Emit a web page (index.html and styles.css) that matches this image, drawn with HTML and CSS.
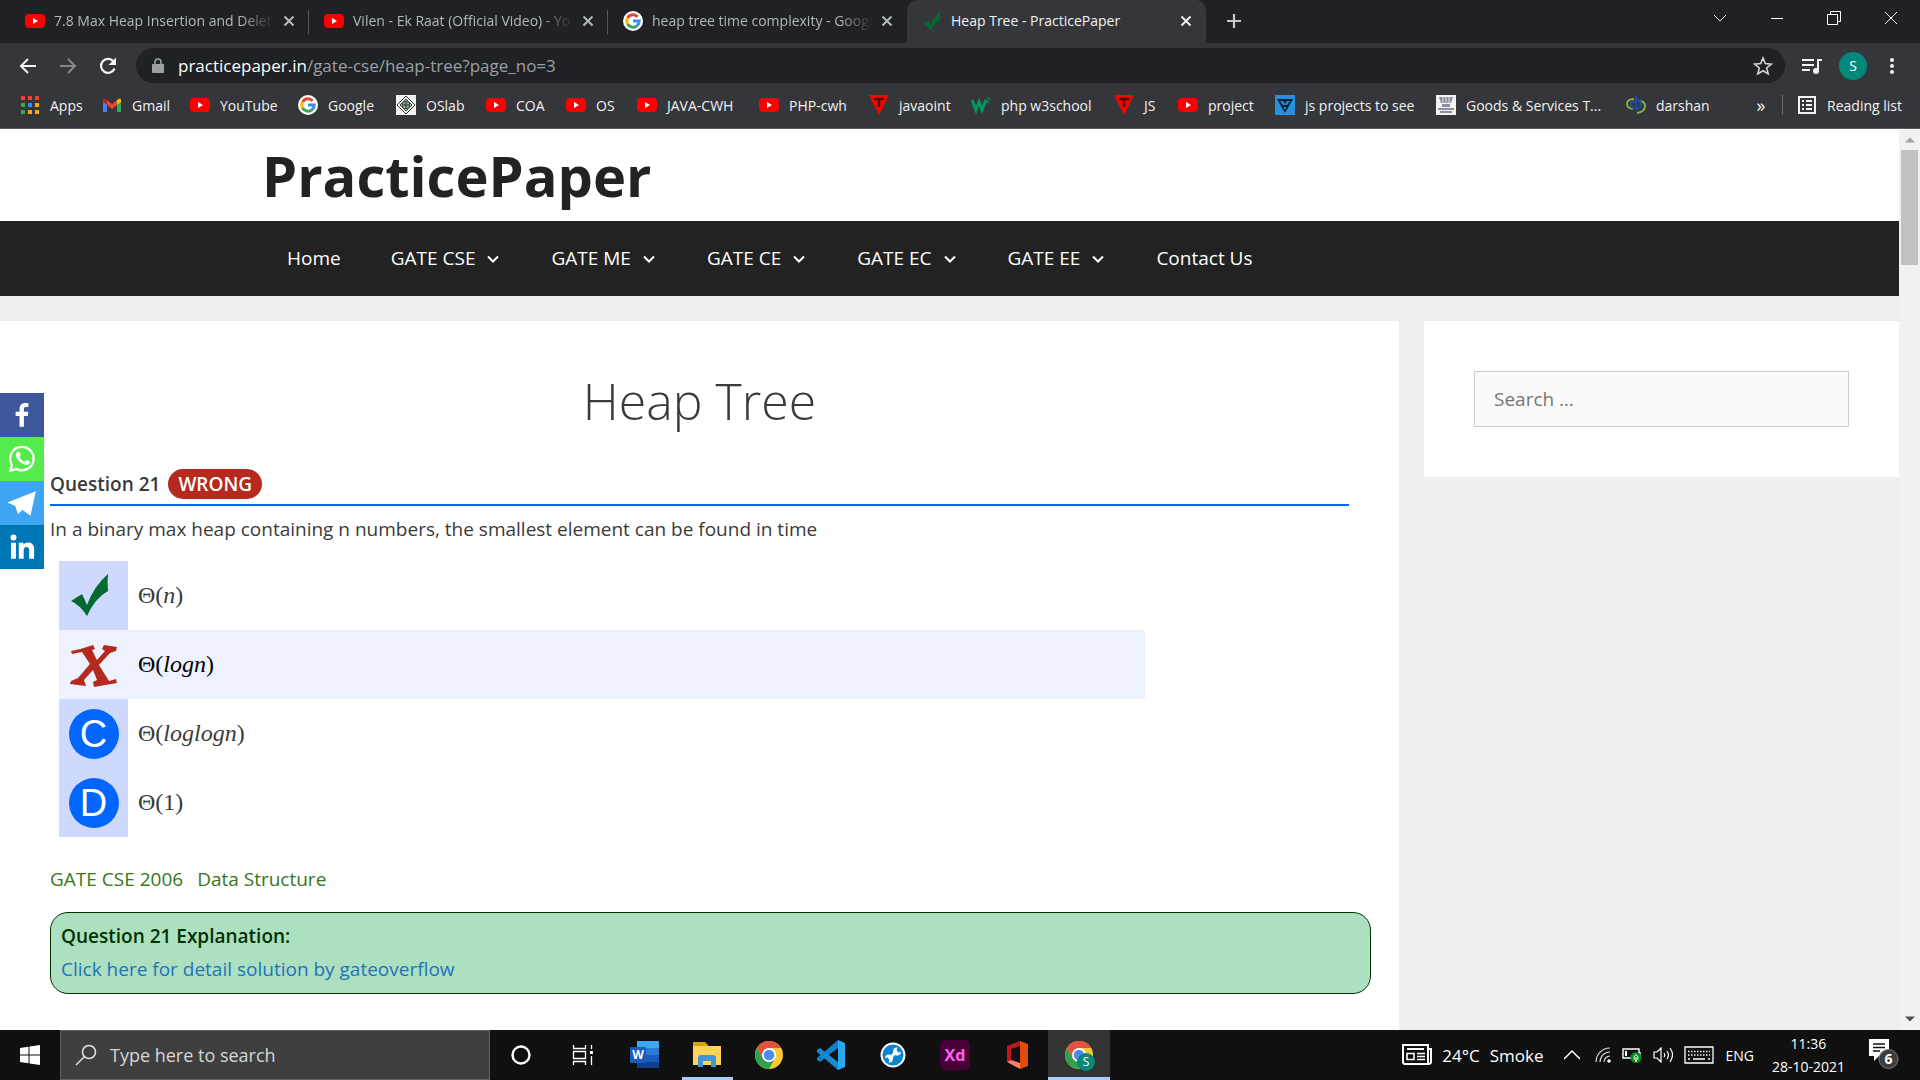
FILE: index.html
```html
<!DOCTYPE html>
<html lang="en">
<head>
<meta charset="utf-8">
<meta name="viewport" content="width=device-width, initial-scale=1">
<title>Heap Tree - PracticePaper</title>
<link rel="stylesheet" href="styles.css">
</head>
<body>
<svg class="sprite" aria-hidden="true">
  <symbol id="yt" viewBox="0 0 20 20"><rect y="3" width="20" height="14" rx="4" fill="#f00"/><path d="M8 7l5 3-5 3z" fill="#fff"/></symbol>
  <symbol id="google" viewBox="0 0 20 20"><circle cx="10" cy="10" r="10" fill="#fff"/><g fill="none" stroke-width="3"><path d="M14.6 5.8A6.2 6.2 0 0 0 4.6 7" stroke="#ea4335"/><path d="M4.6 7a6.2 6.2 0 0 0 0 6" stroke="#fbbc05"/><path d="M4.6 13a6.2 6.2 0 0 0 9.6 1.6" stroke="#34a853"/><path d="M14.2 14.6A6 6 0 0 0 16.2 10H10" stroke="#4285f4"/></g></symbol>
  <symbol id="close" viewBox="0 0 12 12"><path d="M1.5 1.5l9 9m0-9l-9 9" stroke="currentColor" stroke-width="2" fill="none"/></symbol>
  <symbol id="tick" viewBox="0 0 40 44"><path d="M1 28L12 21Q15 27 17 32Q24 13 38 1Q37 9 38 18Q25 25 17 43Q10 32 1 28z" fill="#006a31"/></symbol>
  <symbol id="tpoint" viewBox="0 0 20 20"><path d="M0 0h20L10 20z" fill="#f00"/><path d="M5 4h10M10 4v8" stroke="#4a1010" stroke-width="2.5"/></symbol>
  <symbol id="down" viewBox="0 0 12 8"><path d="M1 1.5l5 5 5-5" stroke="currentColor" stroke-width="2" fill="none"/></symbol>
  <symbol id="chrome" viewBox="0 0 28 28"><circle cx="14" cy="14" r="14" fill="#fcc934"/><path d="M1.9 7A14 14 0 0 1 26.1 7H14z" fill="#e15241"/><path d="M1.9 7A14 14 0 0 0 14 28L20 17.5 14 14 8 17.5z" fill="#2da14f"/><path d="M1.9 7A14 14 0 0 1 26.1 7H14L8 17.5z" fill="#e15241"/><circle cx="14" cy="14" r="7" fill="#fff"/><circle cx="14" cy="14" r="5.3" fill="#4c8bf5"/></symbol>
</svg>

<header class="chrome">
  <div class="tabstrip">
    <div class="tab"><svg class="fav"><use href="#yt"/></svg><span class="tab-title">7.8 Max Heap Insertion and Deletion</span><button class="tab-close" aria-label="Close tab"><svg><use href="#close"/></svg></button></div>
    <div class="tab"><svg class="fav"><use href="#yt"/></svg><span class="tab-title">Vilen - Ek Raat (Official Video) - YouTube</span><button class="tab-close" aria-label="Close tab"><svg><use href="#close"/></svg></button></div>
    <div class="tab"><svg class="fav"><use href="#google"/></svg><span class="tab-title">heap tree time complexity - Google</span><button class="tab-close" aria-label="Close tab"><svg><use href="#close"/></svg></button></div>
    <div class="tab active"><svg class="fav"><use href="#tick"/></svg><span class="tab-title">Heap Tree - PracticePaper</span><button class="tab-close" aria-label="Close tab"><svg><use href="#close"/></svg></button></div>
    <button class="new-tab" aria-label="New tab"><svg viewBox="0 0 16 16"><path d="M8 1v14M1 8h14" stroke="#c5c7ca" stroke-width="2.2"/></svg></button>
    <div class="window-controls">
      <button aria-label="Search tabs"><svg viewBox="0 0 16 16"><path d="M2 5l6 6 6-6" class="thin"/></svg></button>
      <button aria-label="Minimize"><svg viewBox="0 0 16 16"><path d="M2 8.500h12" class="thin"/></svg></button>
      <button aria-label="Restore"><svg viewBox="0 0 16 16"><path d="M1.500 4.500h10v10h-10zM4.500 4.500v-3h10v10h-3" class="thin"/></svg></button>
      <button aria-label="Close window"><svg viewBox="0 0 16 16"><path d="M2 2l12 12m0-12L2 14" class="thin"/></svg></button>
    </div>
  </div>
  <div class="toolbar">
    <button class="tool" aria-label="Back"><svg viewBox="0 0 20 20"><path d="M18 10H3m7-7l-7 7 7 7" fill="none" stroke="#f1f3f4" stroke-width="2"/></svg></button>
    <button class="tool" aria-label="Forward"><svg viewBox="0 0 20 20"><path d="M2 10h15m-7-7l7 7-7 7" fill="none" stroke="#85878a" stroke-width="2"/></svg></button>
    <button class="tool" aria-label="Reload"><svg viewBox="0 0 20 20"><path d="M16.500 12.500A7 7 0 1 1 15.500 5.500" fill="none" stroke="#f1f3f4" stroke-width="2.200"/><path d="M18 1.500v7.500h-7.500z" fill="#f1f3f4"/></svg></button>
    <div class="omnibox">
      <svg class="lock" viewBox="0 0 12 16"><rect y="6" width="12" height="9" rx="1" fill="#9aa0a6"/><path d="M3 7V4a3 3 0 0 1 6 0v3" fill="none" stroke="#9aa0a6" stroke-width="1.600"/></svg>
      <a class="url" href="#top"><span>practicepaper.in</span>/gate-cse/heap-tree?page_no=3</a>
      <button class="star" aria-label="Bookmark this page"><svg viewBox="0 0 20 20"><path d="M10 2l2.300 5.600 6 .5-4.600 3.900 1.500 5.900L10 14.700l-5.200 3.200 1.500-5.900L1.700 8.100l6-.5z" fill="none" stroke="#d2d4d7" stroke-width="1.600"/></svg></button>
    </div>
    <button class="tool" aria-label="Media"><svg viewBox="0 0 20 20"><path d="M0 4h12M0 9h12M0 14h8" stroke="#f1f3f4" stroke-width="2"/><path d="M16 15V4h4" fill="none" stroke="#f1f3f4" stroke-width="2"/><circle cx="14" cy="15" r="3" fill="#f1f3f4"/></svg></button>
    <button class="avatar" aria-label="Profile">S</button>
    <button class="tool" aria-label="Menu"><svg viewBox="0 0 20 20"><g fill="#f1f3f4"><circle cx="10" cy="4" r="2"/><circle cx="10" cy="10" r="2"/><circle cx="10" cy="16" r="2"/></g></svg></button>
  </div>
  <nav class="bookmarks" aria-label="Bookmarks">
    <a href="#apps"><svg viewBox="0 0 20 20"><path d="M1 3h4M8 3h4M15 3h4" stroke="#ea4335" stroke-width="4"/><path d="M1 10h4" stroke="#34a853" stroke-width="4"/><path d="M8 10h4" stroke="#2196f3" stroke-width="4"/><path d="M15 10h4M8 17h4M15 17h4" stroke="#fbab05" stroke-width="4"/><path d="M1 17h4" stroke="#34a853" stroke-width="4"/></svg>Apps</a>
    <a href="#gmail"><svg viewBox="0 0 20 20"><path d="M1 5v12h4V8z" fill="#4285f4"/><path d="M19 5v12h-4V8z" fill="#34a853"/><path d="M5 5l5 4 5-4v5l-5 4-5-4z" fill="#ea4335"/><path d="M1 5q0-3 4 0v5L1 7z" fill="#c5221f"/><path d="M19 5q0-3-4 0v5l4-3z" fill="#fbbc04"/></svg>Gmail</a>
    <a href="#youtube"><svg><use href="#yt"/></svg>YouTube</a>
    <a href="#google-home"><svg><use href="#google"/></svg>Google</a>
    <a href="#oslab"><svg viewBox="0 0 20 20"><path d="M0 0h20v20H0z" fill="#f4f4f4"/><path d="M10 1l9 9-9 9-9-9zM10 4l6 6-6 6-6-6z" fill="none" stroke="#333"/><circle cx="10" cy="10" r="4" fill="#8aa890" stroke="#345c40"/><path d="M6 10h8M10 6v8" stroke="#333"/></svg>OSlab</a>
    <a href="#coa"><svg><use href="#yt"/></svg>COA</a>
    <a href="#os"><svg><use href="#yt"/></svg>OS</a>
    <a href="#java"><svg><use href="#yt"/></svg>JAVA-CWH</a>
    <a href="#php"><svg><use href="#yt"/></svg>PHP-cwh</a>
    <a href="#javaoint"><svg><use href="#tpoint"/></svg>javaoint</a>
    <a href="#w3"><svg viewBox="0 0 20 20"><path d="M1 5l4 10 3-8 3 8 4-10" fill="none" stroke="#059862" stroke-width="3"/><path d="M16 3h3l-1.500 2.500q2 1-1.500 2" fill="none" stroke="#059862"/></svg>php w3school</a>
    <a href="#js"><svg><use href="#tpoint"/></svg>JS</a>
    <a href="#project"><svg><use href="#yt"/></svg>project</a>
    <a href="#jsprojects"><svg viewBox="0 0 20 20"><path d="M0 0h20v20H0z" fill="#2590dd"/><path d="M2 4h16l-8 14z" fill="#0b2036"/><path d="M5 6h3l2 3 2-3h3l-3 4H8zM9 12h2v2H9z" fill="#2590dd"/></svg>js projects to see</a>
    <a href="#gst"><svg viewBox="0 0 20 20"><path d="M0 0h20v20H0z" fill="#f2f2f2"/><path d="M3 2h14l-2 6H5zM6 9h8v3H6z" fill="#8b8fa0"/><path d="M2 14h16M4 17h12" stroke="#8b8fa0" stroke-width="2"/><path d="M7 2v6m3-6v6m3-6v6" stroke="#ddd"/></svg>Goods &amp; Services T...</a>
    <a href="#darshan"><svg viewBox="0 0 20 20"><path d="M8 4Q1 4 1 9q0 4 6 5M13 6q6 0 6 5 0 6-8 7" fill="none" stroke="#7fb13c" stroke-width="2"/><path d="M10 1v14M9 6q-4 0-4 3.500T9 13M11 5q4 0 4 4t-4 4" fill="none" stroke="#1f4ea0" stroke-width="2"/></svg>darshan</a>
    <button class="more" aria-label="More bookmarks">»</button>
    <button class="reading"><svg viewBox="0 0 20 20"><rect x="2" y="2" width="16" height="16" fill="none" stroke="#f1f3f4" stroke-width="2"/><path d="M5 6h2M9 6h6M5 10h2M9 10h6M5 14h2M9 14h6" stroke="#f1f3f4" stroke-width="2"/></svg>Reading list</button>
  </nav>
</header>

<div class="viewport" id="top">
  <div class="page">
    <div class="site-header"><div class="container"><a class="site-title" href="#top">PracticePaper</a></div></div>
    <nav class="site-nav" aria-label="Primary"><div class="container nav-list">
      <a href="#home">Home</a>
      <a href="#cse">GATE CSE<svg><use href="#down"/></svg></a>
      <a href="#me">GATE ME<svg><use href="#down"/></svg></a>
      <a href="#ce">GATE CE<svg><use href="#down"/></svg></a>
      <a href="#ec">GATE EC<svg><use href="#down"/></svg></a>
      <a href="#ee">GATE EE<svg><use href="#down"/></svg></a>
      <a href="#contact">Contact Us</a>
    </div></nav>
    <div class="columns">
      <main class="content">
        <h1>Heap Tree</h1>
        <div class="question-head"><span>Question 21</span><span class="verdict">WRONG</span></div>
        <p class="question">In a binary max heap containing n numbers, the smallest element can be found in time</p>
        <table class="answers">
          <tbody>
          <tr><th scope="row"><svg class="mark" viewBox="0 0 50 50" role="img" aria-label="Correct"><use href="#tick" x="1" y="2" width="40" height="44"/></svg></th><td>Θ(<i>n</i>)</td></tr>
          <tr class="chosen"><th scope="row"><svg class="mark" viewBox="-1 -4 50 50" role="img" aria-label="Wrong"><path d="M1 7Q12 5 23 1L25 5 22 6 27 16 35 7 32 5 34 1 47 3 46 7 40 9 29 21 39 37 46 35 47 39 24 43 23 38 27 36 23 26 14 36 16 42 0 40 1 37 8 34 20 20 12 8 2 10z" fill="#b5291f"/></svg></th><td>Θ(<i>logn</i>)</td></tr>
          <tr><th scope="row"><span class="letter">C</span></th><td>Θ(<i>loglogn</i>)</td></tr>
          <tr><th scope="row"><span class="letter">D</span></th><td>Θ(1)</td></tr>
          </tbody>
        </table>
        <div class="topics"><a href="#gate2006">GATE CSE 2006</a><a href="#ds">Data Structure</a></div>
        <section class="explanation">
          <h2>Question 21 Explanation:</h2>
          <a href="#solution">Click here for detail solution by gateoverflow</a>
        </section>
      </main>
      <aside class="sidebar"><input type="search" placeholder="Search …" aria-label="Search"></aside>
    </div>
  </div>
  <div class="scrollbar" aria-hidden="true">
    <svg viewBox="0 0 10 6"><path d="M0 5.500l5-5 5 5z" fill="#a3a3a3"/></svg>
    <div class="thumb"></div>
    <svg viewBox="0 0 10 6"><path d="M0 .5l5 5 5-5z" fill="#505050"/></svg>
  </div>
  <div class="social">
    <a class="fb" href="#facebook" aria-label="Facebook"><svg viewBox="0 0 32 32"><path d="M17.800 27V17h3.600l.5-4h-4.100v-2.500c0-1.200.4-2 2-2h2.200V4.900c-4.800-.7-8.300.7-8.300 5.300V13H10v4h3.700v10z" fill="#fff"/></svg></a>
    <a class="wa" href="#whatsapp" aria-label="WhatsApp"><svg viewBox="0 0 32 32"><path d="M5 27l1.500-5.600A11 11 0 1 1 11 25.500z" fill="none" stroke="#fff" stroke-width="2.200"/><path d="M11.500 9.500c1-1 2-.6 2.300.2l1 2.400c.2.700-1.300 1.600-1 2.200 1 2 2.500 3.400 4.700 4.200.8.200 1.500-1.800 2.300-1.500l2.400 1.200c.8.500.2 2-.8 2.700-2 1.300-4.600.3-7-1.200-3-2-7.500-6.700-3.900-10.200z" fill="#fff"/></svg></a>
    <a class="tg" href="#telegram" aria-label="Telegram"><svg viewBox="0 0 32 32"><path d="M29 5L2 15.500l7.500 3 2.700 7.800 4.300-3.800 7.500 5.500z" fill="#fff"/></svg></a>
    <a class="li" href="#linkedin" aria-label="LinkedIn"><svg viewBox="0 0 32 32"><circle cx="8" cy="7" r="2.800" fill="#fff"/><path d="M5.700 12h4.600v15H5.700zM13 12h4.400v2c2-3.300 10-3.500 10 4v9h-4.600v-8c0-4-5.200-4-5.200 0v8H13z" fill="#fff"/></svg></a>
  </div>
</div>

<footer class="taskbar">
  <button class="start" aria-label="Start"><svg viewBox="0 0 20 20"><path d="M0 3l8.500-1.200v7.700H0zM9.500 1.500L20 0v9.500H9.500zM0 10.500h8.500v7.700L0 17zM9.500 10.500H20V20L9.500 18.500z" fill="#fff"/></svg></button>
  <label class="task-search"><svg viewBox="0 0 22 22"><circle cx="14" cy="8" r="6.500" fill="none" stroke="#e4e4e4" stroke-width="1.500"/><path d="M9.500 12.500L1 21" stroke="#e4e4e4" stroke-width="1.500"/></svg><input type="text" placeholder="Type here to search" aria-label="Type here to search"></label>
  <div class="apps">
    <button aria-label="Cortana"><svg viewBox="0 0 32 32"><circle cx="16" cy="16" r="8.500" fill="none" stroke="#fff" stroke-width="2.400"/></svg></button>
    <button aria-label="Task view"><svg viewBox="0 0 32 32"><path d="M6.500 6v3.500h12V6M6.500 26v-3.500h12V26M6.500 12.500h12v7h-12zM24.500 6v4M24.500 17v9" fill="none" stroke="#fff" stroke-width="1.300"/><path d="M23 12h3v3h-3z" fill="#fff"/></svg></button>
    <button aria-label="Word"><svg viewBox="0 0 32 32"><path d="M8 2h22v7H8z" fill="#41a5ee"/><path d="M8 9h22v7H8z" fill="#2b7cd3"/><path d="M8 16h22v7H8z" fill="#185abd"/><path d="M8 23h22v6H8z" fill="#103f91"/><rect x="1" y="8" width="16" height="16" rx="1" fill="#185abd"/><text x="9" y="20" text-anchor="middle" class="glyph word">W</text></svg></button>
    <button class="running" aria-label="File Explorer"><svg viewBox="0 0 32 32"><path d="M2 3h12l3 3v6H2z" fill="#dda010"/><path d="M2 7h28v19H2z" fill="#ffd35a"/><path d="M7 28v-9q0-3 3-3h12q3 0 3 3v9h-5v-6h-8v6z" fill="#3f95d8"/></svg></button>
    <button aria-label="Chrome"><svg viewBox="-2 -2 32 32"><use href="#chrome" width="28" height="28"/></svg></button>
    <button aria-label="Visual Studio Code"><svg viewBox="0 0 32 32"><path d="M23 1l7 3v24l-7 3z" fill="#29a9f2"/><path d="M23 1v8L5 23l-3-2v-2z" fill="#0f7fc9"/><path d="M23 31v-8L5 9l-3 2v2z" fill="#1689d1"/></svg></button>
    <button aria-label="Support tool"><svg viewBox="0 0 32 32"><circle cx="16" cy="16" r="11.500" fill="#0a84cf" stroke="#fff" stroke-width="2"/><path d="M12 20l8-8" stroke="#fff" stroke-width="3"/><path d="M20.500 8.500a4 4 0 1 0 3.500 4.500l-3 .5-1.500-2zM11.500 23.500a4 4 0 1 0-3.500-4.500l3-.5 1.500 2z" fill="#fff"/></svg></button>
    <button aria-label="Adobe XD"><svg viewBox="0 0 32 32"><rect x="1" y="1" width="30" height="30" rx="5" fill="#470137"/><text x="16" y="22" text-anchor="middle" class="glyph xd">Xd</text></svg></button>
    <button aria-label="Office"><svg viewBox="0 0 32 32"><path d="M19 2L6 7v16l4-2V10l9-3z" fill="#c3161c"/><path d="M19 2l8 3v22l-8 3z" fill="#e64a0b"/><path d="M6 23l4-2 9 3v6z" fill="#ff7d73"/></svg></button>
    <button class="running current" aria-label="Chrome, profile S"><svg viewBox="-2 -2 32 32"><use href="#chrome" width="28" height="28"/><circle cx="21" cy="21" r="9" fill="#06877a"/><text x="21" y="25" text-anchor="middle" class="glyph badge-s">S</text></svg></button>
  </div>
  <div class="tray">
    <button class="weather"><svg viewBox="0 0 30 22"><path d="M1 1h25v19H3q-2 0-2-2zM26 5h3v13q0 2-3 2M5 5h17" fill="none" stroke="#fff" stroke-width="2"/><path d="M5 9.500h7v6H5zM15 9.500h8M15 12.500h8M15 15.500h8" fill="none" stroke="#fff" stroke-width="1.600"/></svg><span>24°C</span><span>Smoke</span></button>
    <button class="expand" aria-label="Show hidden icons"><svg class="w16" viewBox="0 0 16 16"><path d="M0 12l8-8 8 8" fill="none" stroke="#fff" stroke-width="1.500"/></svg></button>
    <button aria-label="Network"><svg class="w16" viewBox="0 0 16 16"><path d="M1 15A14 14 0 0 1 15 1M5 15A10 10 0 0 1 15 5M9 15a6 6 0 0 1 6-6" fill="none" stroke="#ddd" stroke-width="1.200"/><circle cx="14" cy="14" r="1.800" fill="#fff"/></svg></button>
    <button aria-label="Battery"><svg class="w20" viewBox="0 0 20 16"><path d="M1 2h16v9H1zM18 5v3" fill="none" stroke="#fff" stroke-width="1.400"/><path d="M3 4h2v5H3z" fill="#fff"/><circle cx="14" cy="10.500" r="5.500" fill="#0a8f1c"/><path d="M14 7.500q4 3.500 0 6-4-2.500 0-6zM14 10v5" fill="none" stroke="#fff"/></svg></button>
    <button aria-label="Volume"><svg class="w20" viewBox="0 0 20 16"><path d="M1 5h3l4-4v14l-4-4H1zM11 6q1.500 2 0 4M14 4q3 4 0 8M17 1q5 7 0 14" fill="none" stroke="#fff" stroke-width="1.200"/></svg></button>
    <button aria-label="Touch keyboard"><svg class="w30" viewBox="0 0 30 18"><path d="M1 1h28v16H1z" fill="none" stroke="#fff" stroke-width="1.300"/><path d="M4 5.500h22M4 9h22" stroke="#fff" stroke-width="1.500" stroke-dasharray="1.500 1.500"/><path d="M4 13h2M9 13h12M24 13h2" stroke="#fff" stroke-width="1.500"/></svg></button>
    <button class="lang">ENG</button>
    <button class="clock"><span>11:36</span><span>28-10-2021</span></button>
    <button class="notify" aria-label="6 notifications"><svg viewBox="0 0 30 32"><path d="M0 0h20v17H10l-5 5v-5H0z" fill="#fff"/><path d="M4 5h12M4 8.500h12M4 12h7" stroke="#111" stroke-width="1.300"/><circle cx="19.500" cy="20" r="9.500" fill="#3c3c3c" stroke="#777"/><text x="19.500" y="25" text-anchor="middle" class="glyph">6</text></svg></button>
  </div>
</footer>
</body>
</html>
```
FILE: styles.css
```css
* { box-sizing: border-box; }

body {
  margin: 0;
  height: 100vh;
  display: flex;
  flex-direction: column;
  overflow: hidden;
  font-family: "Open Sans", "Noto Sans", sans-serif;
  background: #eee;
}

a { color: inherit; text-decoration: none; }

button {
  padding: 0;
  border: 0;
  background: none;
  color: inherit;
  font: inherit;
  display: flex;
  align-items: center;
  justify-content: center;
}

svg { flex: none; display: block; }

.sprite { position: absolute; width: 0; height: 0; }

/* Browser frame */
.chrome {
  flex: none;
  background: #35363a;
  color: #f1f3f4;
  border-bottom: 1px solid #5b5c60;
  font-size: 14px;
}

.tabstrip {
  display: flex;
  height: 43px;
  padding-left: 10px;
  background: #202124;
}

.tab {
  display: flex;
  align-items: center;
  flex: 0 1 299px;
  min-width: 0;
  padding: 0 14px 2px 15px;
  gap: 9px;
  color: #b4b7bb;
  background: linear-gradient(#55575b, #55575b) right center / 1px 24px no-repeat;
}

.tab:nth-child(3) { background: none; }
.tab.active { background: #35363a; color: #f1f3f4; border-radius: 10px 10px 0 0; }
.fav { width: 20px; height: 20px; }
.tab-title {
  flex: 1;
  min-width: 0;
  overflow: hidden;
  white-space: nowrap;
  mask-image: linear-gradient(to right, #000 85%, transparent);
}
.tab.active .tab-title { mask-image: none; }
.tab-close svg { width: 12px; height: 12px; }
.new-tab { width: 56px; padding-bottom: 2px; }
.new-tab svg { width: 16px; height: 16px; }

.window-controls { display: flex; margin-left: auto; padding-right: 1px; }
.window-controls button { width: 57px; height: 36px; }
.window-controls svg { width: 16px; height: 16px; }
.thin { fill: none; stroke: #fff; stroke-width: 1; }

.toolbar {
  display: flex;
  align-items: center;
  height: 45px;
  padding: 0 8px;
}

.tool { width: 40px; height: 36px; }
.tool svg, .star svg { width: 20px; height: 20px; }
.omnibox {
  display: flex;
  align-items: center;
  flex: 1;
  height: 35px;
  margin: 0 7px 0 8px;
  padding: 0 12px 0 16px;
  gap: 14px;
  border-radius: 18px;
  background: #202124;
  font-size: 17px;
}
.lock { width: 12px; height: 16px; }
.url { flex: 1; color: #9aa0a6; }
.url span { color: #fff; }
.avatar {
  width: 28px;
  height: 28px;
  margin: 0 5px 0 7px;
  border-radius: 50%;
  background: #00897b;
  color: #fff;
}

.bookmarks {
  display: grid;
  grid-template-columns: 82px 88px 108px 98px 90px 80px 71px 122px 110px 102px 143px 64px 97px 161px 190px 1fr 42px 120px;
  align-items: center;
  height: 40px;
  padding: 0 18px 6px 20px;
  white-space: nowrap;
}
.bookmarks a, .reading { display: flex; align-items: center; gap: 10px; }
.bookmarks svg { width: 20px; height: 20px; }
.more { width: 100%; font-size: 18px; }
.reading { width: 100%; height: 20px; border-left: 1px solid #6a6c70; justify-content: flex-end; }

/* Web page */
.viewport { position: relative; display: flex; flex: 1; min-height: 0; }
.page { flex: 1; min-width: 0; overflow: hidden; font-size: 19px; color: #3a3a3a; }
.container { max-width: 1375px; margin: 0 auto; }

.site-header { background: #fff; }
.site-title {
  display: block;
  padding: 8px 0;
  line-height: 76px;
  font-size: 56px;
  font-weight: 700;
  color: #222;
}

.site-nav { background: #222; color: #fff; line-height: 75px; }
.nav-list { display: flex; }
.nav-list a { display: flex; align-items: center; gap: 12px; padding: 0 25px; }
.nav-list svg { width: 12px; height: 8px; margin-right: 2px; }

.columns { display: flex; align-items: flex-start; gap: 25px; padding-top: 25px; }
.content {
  flex: 1;
  min-width: 0;
  min-height: 760px;
  padding: 50px 50px 0;
  background: #fff;
  line-height: 33px;
}
h1 { margin: 0 0 33px; font-size: 50px; line-height: 60px; font-weight: 300; text-align: center; }
.question-head {
  display: flex;
  align-items: flex-end;
  gap: 8px;
  height: 42px;
  padding-bottom: 5px;
  border-bottom: 2px solid #06f;
  line-height: 30px;
  font-weight: 600;
}
.verdict {
  padding: 0 10px;
  border-radius: 15px;
  background: #b5291f;
  color: #fff;
}
.question { margin: 7px 0 15px; }

.answers { width: 1086px; max-width: 100%; margin-left: 9px; border-collapse: collapse; }
.answers th { width: 69px; height: 69px; padding: 0; background: #cfd9fd; }
.answers td {
  padding: 0 10px;
  font-family: "Liberation Serif", serif;
  font-size: 24px;
}
.chosen, .answers .chosen th { background: #eef2ff; }
.chosen td { color: #000; }
.mark { width: 50px; height: 50px; margin: 0 auto; }
.letter {
  display: block;
  width: 50px;
  margin: 0 auto;
  border-radius: 50%;
  background: #06f;
  color: #fff;
  font: 38px/50px "Liberation Sans", sans-serif;
}

.topics { display: flex; gap: 14px; margin: 26px 0 16px; color: #38761d; }
.explanation {
  margin-right: -22px;
  padding: 7px 10px;
  border: 1px solid #030;
  border-radius: 18px;
  background: #addfc1;
}
.explanation h2 { margin: 0; font-size: 19px; font-weight: 600; color: #030; }
.explanation a { display: block; color: #1e73be; }

.sidebar { flex: 0 1 475px; padding: 50px; background: #fff; }
.sidebar input {
  display: block;
  width: 100%;
  height: 56px;
  padding: 0 19px;
  border: 1px solid #ccc;
  background: #fafafa;
  color: #666;
  font: 19px "Open Sans", sans-serif;
}
.sidebar input::placeholder { color: #757575; opacity: 1; }

.scrollbar {
  display: flex;
  flex-direction: column;
  align-items: center;
  width: 21px;
  padding: 8px 0;
  background: #f1f1f1;
}
.scrollbar svg { width: 10px; height: 6px; }
.thumb { width: 17px; height: 115px; margin: 7px 0 auto; background: #c1c1c1; }

.social { position: absolute; left: 0; top: 264px; width: 44px; }
.social a { display: flex; align-items: center; justify-content: center; height: 44px; }
.social svg { width: 34px; height: 34px; }
.fb { background: #3c589a; }
.wa { background: #55eb4c; }
.tg { background: #3ea5f2; }
.li { background: #0077b5; }

/* Desktop taskbar */
.taskbar { display: flex; flex: none; height: 50px; background: #101010; color: #fff; }
.start { width: 60px; }
.start svg { width: 20px; height: 20px; }
.task-search {
  display: flex;
  align-items: center;
  flex: 0 1 430px;
  gap: 13px;
  padding: 0 14px;
  border: 1px solid #606060;
  background: #3f3f3f;
}
.task-search svg { width: 22px; height: 22px; }
.task-search input {
  flex: 1;
  min-width: 0;
  padding: 0;
  border: 0;
  background: none;
  color: #fff;
  font: 18px "Open Sans", sans-serif;
}
.task-search input::placeholder { color: #d6d6d6; opacity: 1; }
.apps { display: flex; }
.apps button { width: 62px; }
.apps svg { width: 32px; height: 32px; }
.apps .running { background: linear-gradient(#a9cdf8, #a9cdf8) center bottom / 51px 3px no-repeat; }
.apps .current { background-color: #333; background-size: 100% 3px; }
.glyph { font: 700 14px "Open Sans", sans-serif; fill: #fff; }
.glyph.word { font-size: 12px; }
.glyph.xd { font-size: 16px; fill: #ff61f6; }
.glyph.badge-s { font-size: 12px; font-weight: 400; }

.tray { display: flex; gap: 11px; margin-left: auto; padding-right: 21px; font-size: 14px; }
.weather { gap: 10px; margin-right: 10px; font-size: 17px; }
.weather svg { width: 30px; height: 22px; }
.expand { margin-right: 4px; }
.w16 { width: 16px; height: 16px; }
.w20 { width: 20px; height: 16px; }
.w30 { width: 30px; height: 18px; }
.lang { margin-right: 7px; }
.clock { flex-direction: column; line-height: 23px; }
.notify { margin-left: 13px; }
.notify svg { width: 30px; height: 32px; }
```
